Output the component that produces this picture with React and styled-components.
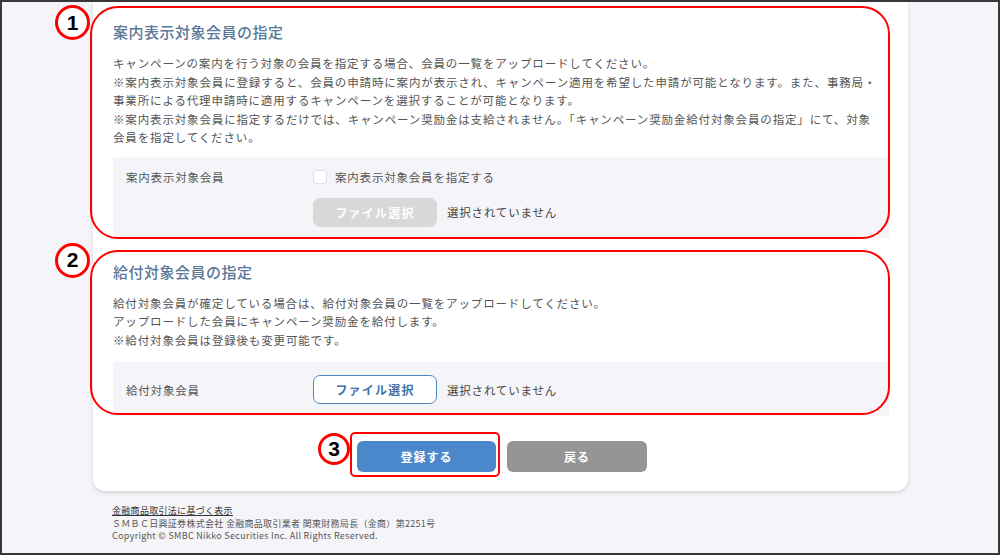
import styled, { createGlobalStyle } from "styled-components";

const GlobalStyle = createGlobalStyle`
  html, body {
    margin: 0;
    padding: 0;
    background: #f5f5f9;
  }
  * {
    box-sizing: border-box;
  }
`;

export default function App() {
  return (
    <>
      <GlobalStyle />
      <Frame>
        <Card>
          <Section>
            <Callout $top={-16} $bottom={-1} />
            <Marker $left={-58} $top={-17}>1</Marker>
            <Title>案内表示対象会員の指定</Title>
            <Description $after={10}>
              キャンペーンの案内を行う対象の会員を指定する場合、会員の一覧をアップロードしてください。
              <br />
              ※案内表示対象会員に登録すると、会員の申請時に案内が表示され、キャンペーン適用を希望した申請が可能となります。また、事務局・
              <br />
              事業所による代理申請時に適用するキャンペーンを選択することが可能となります。
              <br />
              ※案内表示対象会員に指定するだけでは、キャンペーン奨励金は支給されません。「キャンペーン奨励金給付対象会員の指定」にて、対象
              <br />
              会員を指定してください。
            </Description>
            <FieldBox $pad="10px 0 11px">
              <FieldLabel>案内表示対象会員</FieldLabel>
              <FieldValue>
                <CheckRow>
                  <CheckBox />
                  <span>案内表示対象会員を指定する</span>
                </CheckRow>
                <FileRow>
                  <FileButton disabled>ファイル選択</FileButton>
                  <FileStatus>選択されていません</FileStatus>
                </FileRow>
              </FieldValue>
            </FieldBox>
          </Section>

          <Section $gap={24}>
            <Callout $top={-12} $bottom={1} />
            <Marker $left={-58} $top={-19}>2</Marker>
            <Title>給付対象会員の指定</Title>
            <Description $after={13}>
              給付対象会員が確定している場合は、給付対象会員の一覧をアップロードしてください。
              <br />
              アップロードした会員にキャンペーン奨励金を給付します。
              <br />
              ※給付対象会員は登録後も変更可能です。
            </Description>
            <FieldBox $pad="13px 0 12px" $center>
              <FieldLabel>給付対象会員</FieldLabel>
              <FileRow>
                <FileButton>ファイル選択</FileButton>
                <FileStatus>選択されていません</FileStatus>
              </FileRow>
            </FieldBox>
          </Section>

          <Actions>
            <Highlight>
              <ButtonCallout />
              <Marker $left={-39} $top={-8} $size={32}>3</Marker>
              <ActionButton $primary>登録する</ActionButton>
            </Highlight>
            <ActionButton>戻る</ActionButton>
          </Actions>
        </Card>

        <Footer>
          <FooterLink>金融商品取引法に基づく表示</FooterLink>
          <FooterLine>ＳＭＢＣ日興証券株式会社 金融商品取引業者 関東財務局長（金商）第2251号</FooterLine>
          <FooterLine>Copyright © SMBC Nikko Securities Inc. All Rights Reserved.</FooterLine>
        </Footer>
      </Frame>
    </>
  );
}

const Frame = styled.div`
  width: 1000px;
  height: 555px;
  border: 2px solid #383838;
  background: #f5f5f9;
  overflow: hidden;
  font-family: "Noto Sans CJK JP", "Noto Sans", sans-serif;
  color: #555;
`;

const Card = styled.div`
  margin-left: 91px;
  width: 815px;
  background: #fff;
  border-radius: 0 0 12px 12px;
  box-shadow: 0 2px 4px rgba(0, 0, 0, 0.13);
  padding: 20px 19px 19px 20px;
`;

const Section = styled.section`
  position: relative;
  margin-top: ${(p) => p.$gap || 0}px;
`;

const Callout = styled.div`
  position: absolute;
  left: -23px;
  right: -1px;
  top: ${(p) => p.$top}px;
  bottom: ${(p) => p.$bottom}px;
  border: 2px solid #f00;
  border-radius: 28px;
  pointer-events: none;
  z-index: 2;
`;

const Marker = styled.div`
  position: absolute;
  left: ${(p) => p.$left}px;
  top: ${(p) => p.$top}px;
  width: ${(p) => p.$size || 35}px;
  height: ${(p) => p.$size || 35}px;
  border: 3px solid #f00;
  border-radius: 50%;
  background: #fff;
  color: #000;
  display: flex;
  align-items: center;
  justify-content: center;
  font-family: "Liberation Sans", Arial, sans-serif;
  font-weight: 700;
  font-size: 21px;
  z-index: 3;
`;

const Title = styled.h2`
  margin: 0;
  font-size: 15px;
  line-height: 20px;
  font-weight: 500;
  letter-spacing: 0.5px;
  color: #5a7898;
`;

const Description = styled.p`
  margin: 12px 0 ${(p) => p.$after}px;
  font-size: 11.5px;
  line-height: 18.5px;
  letter-spacing: 0.85px;
  white-space: nowrap;
  color: #555;
`;

const FieldBox = styled.div`
  display: grid;
  grid-template-columns: 187px 1fr;
  align-items: ${(p) => (p.$center ? "center" : "start")};
  padding: ${(p) => p.$pad};
  padding-left: 13px;
  background: #f5f5f9;
  font-size: 11.5px;
  letter-spacing: 0.8px;
`;

const FieldLabel = styled.div`
  line-height: 20px;
  color: #555;
`;

const FieldValue = styled.div`
  display: flex;
  flex-direction: column;
  gap: 11px;
`;

const CheckRow = styled.label`
  display: flex;
  align-items: center;
  gap: 8px;
  line-height: 20px;
  color: #555;
`;

const CheckBox = styled.span`
  width: 14px;
  height: 14px;
  border: 1px solid #e0e0e4;
  border-radius: 3px;
  background: #fff;
`;

const FileRow = styled.div`
  display: flex;
  align-items: center;
  gap: 10px;
`;

const FileButton = styled.button`
  width: 124px;
  height: 29px;
  border-radius: 7px;
  font-family: inherit;
  font-size: 12px;
  font-weight: 700;
  letter-spacing: 1.2px;
  border: 1.5px solid ${(p) => (p.disabled ? "#d8d8d8" : "#4f86c0")};
  background: ${(p) => (p.disabled ? "#d8d8d8" : "#fff")};
  color: ${(p) => (p.disabled ? "#fff" : "#3f72aa")};
`;

const FileStatus = styled.span`
  color: #444;
`;

const Actions = styled.div`
  display: flex;
  justify-content: center;
  gap: 11px;
  margin-top: 25px;
  padding-left: 2px;
`;

const Highlight = styled.div`
  position: relative;
  display: flex;
`;

const ButtonCallout = styled.div`
  position: absolute;
  left: -7px;
  right: -4px;
  top: -9px;
  bottom: -5px;
  border: 2px solid #f00;
  border-radius: 5px;
  pointer-events: none;
`;

const ActionButton = styled.button`
  width: ${(p) => (p.$primary ? 139 : 140)}px;
  height: 31px;
  border: none;
  border-radius: 6px;
  font-family: inherit;
  font-size: 12px;
  font-weight: 700;
  letter-spacing: 1px;
  color: #fff;
  background: ${(p) => (p.$primary ? "#4a87cb" : "#959595")};
`;

const Footer = styled.footer`
  margin-top: 14px;
  padding-left: 110px;
  font-size: 9px;
  line-height: 12.5px;
  letter-spacing: 0.3px;
`;

const FooterLink = styled.div`
  color: #333;
  text-decoration: underline;
`;

const FooterLine = styled.div`
  color: #555;
`;
